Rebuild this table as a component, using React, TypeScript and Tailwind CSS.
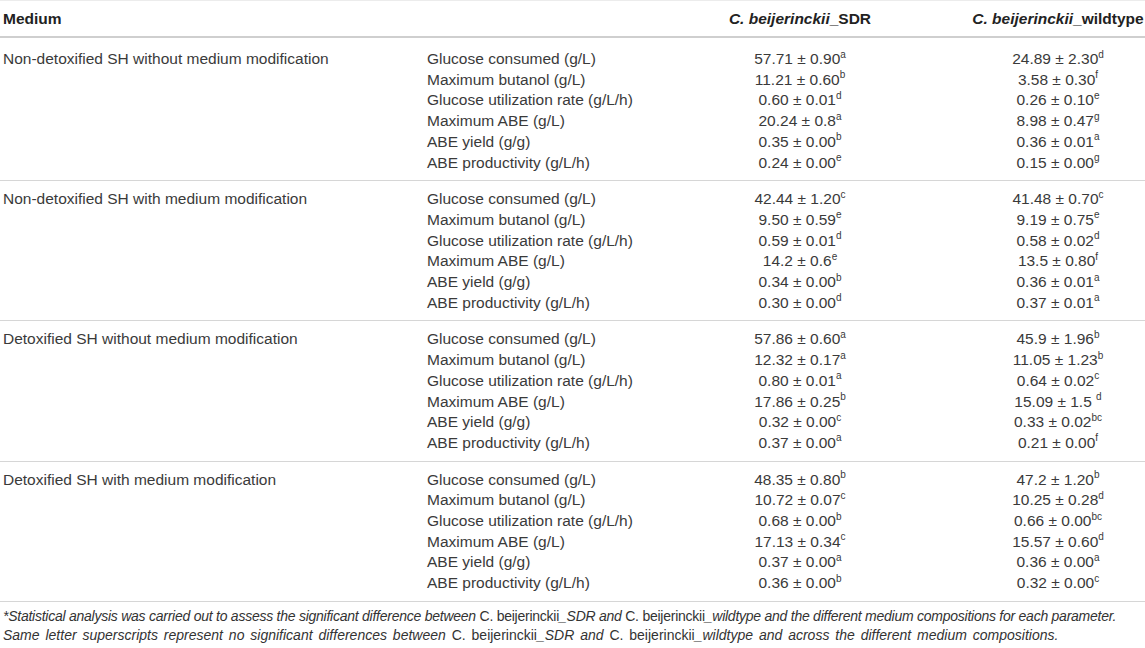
import * as React from 'react';

type Row = [string, string, string, string, string];

const groups: { medium: string; rows: Row[] }[] = [
    {
        medium: 'Non-detoxified SH without medium modification',
        rows: [
            ['Glucose consumed (g/L)', '57.71 ± 0.90', 'a', '24.89 ± 2.30', 'd'],
            ['Maximum butanol (g/L)', '11.21 ± 0.60', 'b', '3.58 ± 0.30', 'f'],
            ['Glucose utilization rate (g/L/h)', '0.60 ± 0.01', 'd', '0.26 ± 0.10', 'e'],
            ['Maximum ABE (g/L)', '20.24 ± 0.8', 'a', '8.98 ± 0.47', 'g'],
            ['ABE yield (g/g)', '0.35 ± 0.00', 'b', '0.36 ± 0.01', 'a'],
            ['ABE productivity (g/L/h)', '0.24 ± 0.00', 'e', '0.15 ± 0.00', 'g'],
        ],
    },
    {
        medium: 'Non-detoxified SH with medium modification',
        rows: [
            ['Glucose consumed (g/L)', '42.44 ± 1.20', 'c', '41.48 ± 0.70', 'c'],
            ['Maximum butanol (g/L)', '9.50 ± 0.59', 'e', '9.19 ± 0.75', 'e'],
            ['Glucose utilization rate (g/L/h)', '0.59 ± 0.01', 'd', '0.58 ± 0.02', 'd'],
            ['Maximum ABE (g/L)', '14.2 ± 0.6', 'e', '13.5 ± 0.80', 'f'],
            ['ABE yield (g/g)', '0.34 ± 0.00', 'b', '0.36 ± 0.01', 'a'],
            ['ABE productivity (g/L/h)', '0.30 ± 0.00', 'd', '0.37 ± 0.01', 'a'],
        ],
    },
    {
        medium: 'Detoxified SH without medium modification',
        rows: [
            ['Glucose consumed (g/L)', '57.86 ± 0.60', 'a', '45.9 ± 1.96', 'b'],
            ['Maximum butanol (g/L)', '12.32 ± 0.17', 'a', '11.05 ± 1.23', 'b'],
            ['Glucose utilization rate (g/L/h)', '0.80 ± 0.01', 'a', '0.64 ± 0.02', 'c'],
            ['Maximum ABE (g/L)', '17.86 ± 0.25', 'b', '15.09 ± 1.5 ', 'd'],
            ['ABE yield (g/g)', '0.32 ± 0.00', 'c', '0.33 ± 0.02', 'bc'],
            ['ABE productivity (g/L/h)', '0.37 ± 0.00', 'a', '0.21 ± 0.00', 'f'],
        ],
    },
    {
        medium: 'Detoxified SH with medium modification',
        rows: [
            ['Glucose consumed (g/L)', '48.35 ± 0.80', 'b', '47.2 ± 1.20', 'b'],
            ['Maximum butanol (g/L)', '10.72 ± 0.07', 'c', '10.25 ± 0.28', 'd'],
            ['Glucose utilization rate (g/L/h)', '0.68 ± 0.00', 'b', '0.66 ± 0.00', 'bc'],
            ['Maximum ABE (g/L)', '17.13 ± 0.34', 'c', '15.57 ± 0.60', 'd'],
            ['ABE yield (g/g)', '0.37 ± 0.00', 'a', '0.36 ± 0.00', 'a'],
            ['ABE productivity (g/L/h)', '0.36 ± 0.00', 'b', '0.32 ± 0.00', 'c'],
        ],
    },
];

const cols = 'grid grid-cols-[424px_205px_342px_174px]';

const Val = ({ v, s }: { v: string; s: string }) => (
    <div className="whitespace-pre text-center">
        {v}
        <sup className="text-[10px] -top-[0.65em]">{s}</sup>
    </div>
);

export default function App() {
    return (
        <div className="w-[1145px] h-[648px] bg-white text-[15.5px] text-[#3a3a3a] font-['Liberation_Sans',Arial,sans-serif] overflow-hidden border-t border-[#ececec]">
            <div className={`${cols} h-[37px] items-center border-b-2 border-[#cfcfcf] font-bold text-[#222]`}>
                <div className="pl-[3px]">Medium</div>
                <div />
                <div className="text-center">
                    <i>C. beijerinckii</i>_SDR
                </div>
                <div className="text-center">
                    <i>C. beijerinckii</i>_wildtype
                </div>
            </div>

            {groups.map((g, i) => (
                <div
                    key={g.medium}
                    className={`${cols} ${i === 0 ? 'pt-[11px]' : 'pt-[8px]'} pb-[7px] border-b border-[#d6d6d6] leading-[20.7px]`}
                >
                    <div className="pl-[3px]">{g.medium}</div>
                    <div className="pl-[3px]">
                        {g.rows.map((r) => (
                            <div key={r[0]} className="whitespace-nowrap">{r[0]}</div>
                        ))}
                    </div>
                    <div>
                        {g.rows.map((r) => (
                            <Val key={r[0]} v={r[1]} s={r[2]} />
                        ))}
                    </div>
                    <div>
                        {g.rows.map((r) => (
                            <Val key={r[0]} v={r[3]} s={r[4]} />
                        ))}
                    </div>
                </div>
            ))}

            <div className="pl-[3px] pt-[5px] text-[14px] italic leading-[19px] text-[#333]">
                <div className="tracking-[-0.25px] whitespace-nowrap">
                    *Statistical analysis was carried out to assess the significant difference between{' '}
                    <span className="not-italic">C. beijerinckii</span>_SDR and{' '}
                    <span className="not-italic">C. beijerinckii</span>_wildtype and the different medium
                    compositions for each parameter.
                </div>
                <div className="whitespace-nowrap [word-spacing:2px]">
                    Same letter superscripts represent no significant differences between{' '}
                    <span className="not-italic">C. beijerinckii</span>_SDR and{' '}
                    <span className="not-italic">C. beijerinckii</span>_wildtype and across the different
                    medium compositions.
                </div>
            </div>
        </div>
    );
}
